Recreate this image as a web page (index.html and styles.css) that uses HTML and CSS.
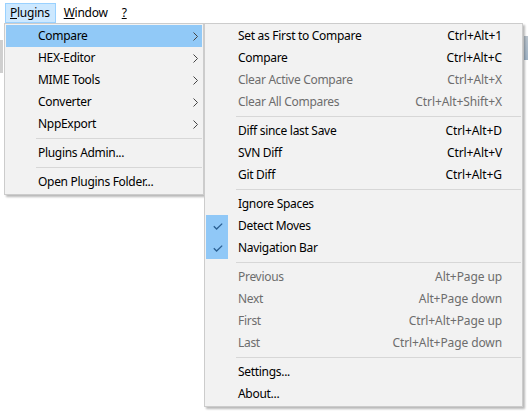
FILE: index.html
```html
<!DOCTYPE html>
<html>
<head>
<meta charset="utf-8">
<link rel="stylesheet" href="styles.css">
</head>
<body>
<div class="menubar">
  <span class="mb-item active"><u>P</u>lugins</span>
  <span class="mb-item"><u>W</u>indow</span>
  <span class="mb-item"><u>?</u></span>
</div>

<div class="menu main-menu">
  <div class="mi hot"><span class="gutter"></span><span class="label">Compare</span><svg class="arrow" width="5" height="9" viewBox="0 0 5 9"><polyline points="0.5,0.5 4.5,4.5 0.5,8.5" fill="none" stroke="#444" stroke-width="1"/></svg></div>
  <div class="mi"><span class="gutter"></span><span class="label">HEX-Editor</span><svg class="arrow" width="5" height="9" viewBox="0 0 5 9"><polyline points="0.5,0.5 4.5,4.5 0.5,8.5" fill="none" stroke="#444" stroke-width="1"/></svg></div>
  <div class="mi"><span class="gutter"></span><span class="label">MIME Tools</span><svg class="arrow" width="5" height="9" viewBox="0 0 5 9"><polyline points="0.5,0.5 4.5,4.5 0.5,8.5" fill="none" stroke="#444" stroke-width="1"/></svg></div>
  <div class="mi"><span class="gutter"></span><span class="label">Converter</span><svg class="arrow" width="5" height="9" viewBox="0 0 5 9"><polyline points="0.5,0.5 4.5,4.5 0.5,8.5" fill="none" stroke="#444" stroke-width="1"/></svg></div>
  <div class="mi"><span class="gutter"></span><span class="label">NppExport</span><svg class="arrow" width="5" height="9" viewBox="0 0 5 9"><polyline points="0.5,0.5 4.5,4.5 0.5,8.5" fill="none" stroke="#444" stroke-width="1"/></svg></div>
  <div class="sep"></div>
  <div class="mi"><span class="gutter"></span><span class="label">Plugins Admin...</span></div>
  <div class="sep"></div>
  <div class="mi"><span class="gutter"></span><span class="label">Open Plugins Folder...</span></div>
</div>

<div class="menu sub-menu">
  <div class="mi"><span class="gutter"></span><span class="label">Set as First to Compare</span><span class="key">Ctrl+Alt+1</span></div>
  <div class="mi"><span class="gutter"></span><span class="label">Compare</span><span class="key">Ctrl+Alt+C</span></div>
  <div class="mi disabled"><span class="gutter"></span><span class="label">Clear Active Compare</span><span class="key">Ctrl+Alt+X</span></div>
  <div class="mi disabled"><span class="gutter"></span><span class="label">Clear All Compares</span><span class="key">Ctrl+Alt+Shift+X</span></div>
  <div class="sep"></div>
  <div class="mi"><span class="gutter"></span><span class="label">Diff since last Save</span><span class="key">Ctrl+Alt+D</span></div>
  <div class="mi"><span class="gutter"></span><span class="label">SVN Diff</span><span class="key">Ctrl+Alt+V</span></div>
  <div class="mi"><span class="gutter"></span><span class="label">Git Diff</span><span class="key">Ctrl+Alt+G</span></div>
  <div class="sep"></div>
  <div class="mi"><span class="gutter"></span><span class="label">Ignore Spaces</span></div>
  <div class="mi"><span class="gutter checked"><svg width="10" height="7" viewBox="0 0 10 7"><polyline points="0.8,3.2 3.6,6 9.2,0.6" fill="none" stroke="#2a5f92" stroke-width="1.3"/></svg></span><span class="label">Detect Moves</span></div>
  <div class="mi"><span class="gutter checked"><svg width="10" height="7" viewBox="0 0 10 7"><polyline points="0.8,3.2 3.6,6 9.2,0.6" fill="none" stroke="#2a5f92" stroke-width="1.3"/></svg></span><span class="label">Navigation Bar</span></div>
  <div class="sep"></div>
  <div class="mi disabled"><span class="gutter"></span><span class="label">Previous</span><span class="key">Alt+Page up</span></div>
  <div class="mi disabled"><span class="gutter"></span><span class="label">Next</span><span class="key">Alt+Page down</span></div>
  <div class="mi disabled"><span class="gutter"></span><span class="label">First</span><span class="key">Ctrl+Alt+Page up</span></div>
  <div class="mi disabled"><span class="gutter"></span><span class="label">Last</span><span class="key">Ctrl+Alt+Page down</span></div>
  <div class="sep"></div>
  <div class="mi"><span class="gutter"></span><span class="label">Settings...</span></div>
  <div class="mi"><span class="gutter"></span><span class="label">About...</span></div>
</div>
</body>
</html>
```

FILE: styles.css
```css
html, body {
  margin: 0;
  padding: 0;
}
html {
  background-color: #ffffff;
  background-image:
    linear-gradient(#cfcfcf, #cfcfcf),
    linear-gradient(#b9c3cc, #9fb3c6);
  background-repeat: no-repeat;
  background-size: 3px 33px, 4px 24px;
  background-position: 0 40px, 524px 36px;
}
body {
  width: 528px;
  height: 413px;
  position: relative;
  overflow: hidden;
  font-family: "Noto Sans", "DejaVu Sans", sans-serif;
  font-size: 12px;
  color: #000;
}
.menubar {
  display: flex;
  gap: 3px;
  padding: 3px 0 0 5px;
  height: 19px;
}
.mb-item {
  display: flex;
  align-items: center;
  height: 17px;
  padding: 0 5px 1px 4px;
  box-sizing: content-box;
  border: 1px solid transparent;
  letter-spacing: -0.25px;
  margin-bottom: -1px;
}
.mb-item.active {
  background: #cce8ff;
  border-color: #99d1ff;
}
.menu {
  position: absolute;
  top: 23px;
  background: #f2f2f2;
  border: 1px solid #cccccc;
  padding: 1px;
  box-shadow: 2px 2px 2px rgba(0, 0, 0, 0.28);
}
.main-menu {
  left: 4px;
  width: 196px;
}
.sub-menu {
  left: 204px;
  width: 315px;
}
.mi {
  display: flex;
  align-items: center;
  height: 22px;
}
.mi.hot {
  background: #91c9f7;
}
.gutter {
  width: 22px;
  height: 22px;
  flex: none;
  display: flex;
  align-items: center;
  justify-content: center;
}
.gutter.checked {
  background: #90c8f7;
}
.gutter svg {
  display: block;
  margin-left: 1px;
}
.label {
  flex: 1;
  padding-left: 10px;
  padding-bottom: 2px;
  white-space: nowrap;
  letter-spacing: -0.3px;
}
.key {
  padding-right: 19px;
  padding-bottom: 2px;
  white-space: nowrap;
  letter-spacing: -0.1px;
}
.disabled {
  color: #6d6d6d;
}
.arrow {
  display: block;
  margin-right: 4px;
}
.sep {
  height: 1px;
  margin: 3px 0 3px 30px;
  background: #d7d7d7;
}
```
